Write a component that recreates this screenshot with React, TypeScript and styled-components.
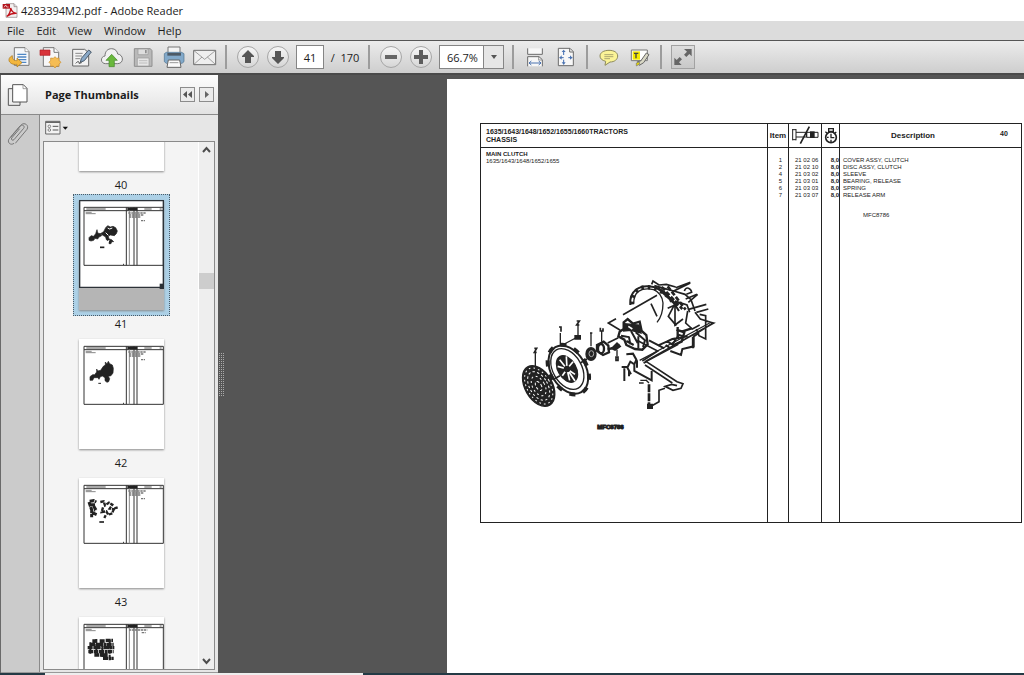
import React from "react";
import styled, { createGlobalStyle } from "styled-components";

const GlobalStyle = createGlobalStyle`
  *, *::before, *::after { box-sizing: border-box; }
  body { margin: 0; background: #fff; overflow: hidden; }
  button, input, select { font: inherit; color: inherit; margin: 0; }
`;

/* ---------- window frame ---------- */

const Window = styled.div`
  display: flex;
  flex-direction: column;
  height: 100vh;
  font-family: "Open Sans", "Noto Sans", sans-serif;
  font-size: 11px;
  color: #1c1c1c;
`;

const TitleBar = styled.header`
  display: flex;
  align-items: center;
  gap: 3px;
  height: 21px;
  padding-left: 2px;
  background: #fff;
`;

const WindowTitle = styled.h1`
  margin: 0;
  font-size: 11px;
  line-height: 20px;
  font-weight: 400;
  white-space: nowrap;
`;

const MenuBar = styled.nav`
  display: flex;
  align-items: center;
  gap: 12px;
  height: 19px;
  padding-left: 7px;
  background: #dcdcdc;
`;

const MenuItem = styled.button`
  padding: 0;
  border: 0;
  background: none;
  line-height: 18px;
`;

const Toolbar = styled.div`
  display: flex;
  align-items: center;
  height: 35px;
  padding-left: 7px;
  border-top: 1px solid #555;
  border-bottom: 2px solid #4a4a4a;
  background: linear-gradient(#ececec, #cecece);
`;

const ToolGroup = styled.div<{ $gap?: number }>`
  display: flex;
  align-items: center;
  gap: ${(p) => p.$gap ?? 7}px;
`;

const Separator = styled.span`
  width: 2px;
  height: 24px;
  margin: 0 9px 0 8px;
  background: #9c9c9c;
`;

const ToolButton = styled.button<{ $framed?: boolean }>`
  display: grid;
  place-items: center;
  width: 24px;
  height: 24px;
  padding: 0;
  border: ${(p) => (p.$framed ? "1px solid #a2a2a2" : "0")};
  background: ${(p) => (p.$framed ? "linear-gradient(#dedede, #c8c8c8)" : "none")};
`;

const RoundButton = styled(ToolButton)`
  > svg {
    width: 22px;
    height: 22px;
    border: 1px solid #a6a6a6;
    border-radius: 50%;
    background: linear-gradient(#f6f6f6, #d6d6d6);
  }
`;

const PageInput = styled.input`
  width: 28px;
  height: 24px;
  padding: 0;
  border: 1px solid #858585;
  background: #fff;
  text-align: center;
`;

const PageCount = styled.span`
  width: 30px;
  text-align: center;
  white-space: pre;
`;

const ZoomBox = styled.label`
  position: relative;
  display: block;
  width: 65px;
  height: 24px;
  border: 1px solid #858585;
  background: linear-gradient(#fff, #fff) 0 0 / 44px 100% no-repeat, #e6e6e6;
`;

const ZoomSelect = styled.select`
  width: 100%;
  height: 22px;
  padding: 0 0 0 7px;
  border: 0;
  background: none;
  appearance: none;
`;

const ZoomArrow = styled.span`
  position: absolute;
  top: 0;
  right: 0;
  display: grid;
  place-items: center;
  width: 20px;
  height: 22px;
  border-left: 1px solid #858585;
  pointer-events: none;
`;

const Workspace = styled.div`
  flex: 1;
  min-height: 0;
  display: flex;
  border-left: 1px solid #6a6a6a;
  background: #555;
`;

/* ---------- side panel ---------- */

const Sidebar = styled.aside`
  display: flex;
  flex-direction: column;
  width: 217px;
  background: #e6e6e6;
  border-bottom: 1px solid #999;
`;

const SidebarHeader = styled.div`
  display: flex;
  align-items: center;
  height: 40px;
  padding-right: 4px;
  border-bottom: 1px solid #8a8a8a;
  background: linear-gradient(#fdfdfd, #e2e2e2);
`;

const PanelTab = styled.button`
  display: grid;
  place-items: center;
  width: 38px;
  height: 38px;
  padding: 0 4px 0 0;
  border: 0;
  background: none;
`;

const PanelTitle = styled.h2`
  flex: 1;
  margin: 0;
  padding-left: 6px;
  font-size: 11px;
  line-height: 16px;
  font-weight: 700;
`;

const PanelNavButton = styled.button`
  display: grid;
  place-items: center;
  width: 15px;
  height: 15px;
  margin-left: 4px;
  padding: 0;
  border: 1px solid #8c8c8c;
  background: #ebebeb;
`;

const SidebarBody = styled.div`
  flex: 1;
  min-height: 0;
  display: flex;
`;

const Rail = styled.div`
  width: 39px;
  border-right: 1px solid #8a8a8a;
  background: #cbcbcb;
`;

const PanelBody = styled.div`
  flex: 1;
  min-width: 0;
  display: flex;
  flex-direction: column;
  padding: 0 3px 2px 3px;
`;

const OptionsButton = styled.button`
  display: flex;
  align-items: center;
  width: 28px;
  height: 26px;
  margin-left: 2px;
  padding: 0;
  border: 0;
  background: none;
`;

const ThumbnailBox = styled.div`
  flex: 1;
  min-height: 0;
  display: flex;
  border: 1px solid #8a8a8a;
  background: #f4f4f4;
`;

const ThumbnailList = styled.ol`
  flex: 1;
  margin: 0;
  padding: 0;
  list-style: none;
  overflow: hidden;

  > li:first-child {
    margin-top: -87px;
  }
`;

const ThumbnailItem = styled.li`
  display: flex;
  flex-direction: column;
  align-items: center;
  height: 139px;
`;

const ThumbnailButton = styled.button<{ $selected?: boolean }>`
  width: 97px;
  height: 122px;
  padding: 5px;
  border: 1px ${(p) => (p.$selected ? "dotted #4a5a66" : "solid transparent")};
  background: ${(p) => (p.$selected ? "#acd0e6" : "none")};
`;

const ThumbnailSheet = styled.span<{ $selected?: boolean }>`
  display: block;
  height: 110px;
  background: ${(p) => (p.$selected ? "#b5b5b5" : "#fff")};
  box-shadow: 0 1px 2px #8a8a8a;
`;

const ThumbnailLabel = styled.span`
  line-height: 15px;
`;

const ScrollTrack = styled.div`
  display: flex;
  flex-direction: column;
  width: 16px;
  border-left: 1px solid #fff;
  background: #eee;
`;

const ScrollButton = styled.button`
  display: grid;
  place-items: center;
  height: 16px;
  padding: 0;
  border: 0;
  background: none;
`;

const ScrollSpace = styled.span<{ $share: number }>`
  flex: ${(p) => p.$share};
`;

const ScrollThumb = styled.span`
  height: 16px;
  background: #cdcdcd;
`;

const Splitter = styled.div`
  display: flex;
  align-items: center;
  width: 6px;
  padding-left: 1px;
`;

const Grip = styled.span`
  width: 5px;
  height: 45px;
  background: repeating-linear-gradient(#555 0 1px, transparent 1px 2px),
    repeating-linear-gradient(90deg, #aaa 0 1px, #555 1px 2px);
`;

/* ---------- document ---------- */

const DocumentView = styled.main`
  flex: 1;
  min-width: 0;
  display: flex;
  padding: 4px 0 0 223px;
`;

const Sheet = styled.article`
  flex: 1;
  min-width: 0;
  padding: 44px 2px 0 33px;
  background: #fff;
  color: #222;
  font-family: "Liberation Sans", Arial, sans-serif;
  font-size: 6px;
  line-height: 7px;
`;

const PartsTable = styled.table`
  width: 100%;
  table-layout: fixed;
  border-collapse: collapse;
  border: 1px solid #222;

  th, td {
    padding: 0;
    border-left: 1px solid #222;
    vertical-align: top;
    font-size: 6px;
    line-height: 7px;
    white-space: nowrap;
  }
`;

const HeadRow = styled.tr`
  height: 24px;
  border-bottom: 1px solid #222;

  && th {
    vertical-align: middle;
  }
`;

const DocumentTitle = styled.span`
  display: block;
  padding-left: 5px;
  text-align: left;
  font-size: 7px;
  line-height: 8px;
`;

const ColumnTitle = styled.span`
  display: block;
  font-size: 8px;
  line-height: 10px;
`;

const DescriptionHead = styled.span`
  display: grid;
  grid-template-columns: 146px 1fr;
  text-align: center;
  line-height: 10px;

  > small {
    padding-left: 14px;
    text-align: left;
    font-size: 7px;
    line-height: 6px;
  }
`;

const HeadIcon = styled.svg`
  display: block;
  margin: 0 auto;
`;

const PartRow = styled.tr<{ $height?: number }>`
  height: ${(p) => p.$height ?? 7}px;
`;

const NumberCell = styled.td`
  text-align: right;

  && {
    padding-right: ${6}px;
  }
`;

const CodeCell = styled.td`
  && {
    padding-left: 6px;
  }
`;

const QuantityCell = styled.td`
  text-align: right;
  font-weight: 700;
`;

const TextCell = styled.td`
  && {
    padding-left: 3px;
  }
`;

const DrawingNumber = styled.span`
  display: block;
  padding: 13px 0 0 20px;
`;

const Section = styled.div`
  padding: 3px 0 0 5px;
`;

const SectionTitle = styled.h3`
  margin: 0;
  font-size: 6px;
  line-height: 7px;
  font-weight: 700;
`;

const Models = styled.p`
  margin: 0;
`;

const Figure = styled.figure`
  width: 220px;
  margin: 106px 0 0 25px;

  > svg { display: block; }
`;

const FigureCaption = styled.figcaption`
  padding-right: 21px;
  margin-top: 5px;
  text-align: center;
  font-weight: 700;
  -webkit-text-stroke: 1px #222;
`;

const Taskbar = styled.footer`
  height: 2px;
  background: #243a45;

  &::before {
    content: "";
    display: block;
    width: 318px;
    height: 2px;
    margin-left: 45px;
    background: #eee;
  }
`;

/* ---------- icons ---------- */

const PdfIcon = () => (
  <svg width="16" height="18" viewBox="3 6 48 54" aria-hidden="true">
    <path d="M15 11h24l9 9v32H15z" fill="#f4f0f0" stroke="#8d8181" strokeWidth="2" />
    <path d="M39 11v9h9" fill="#ddd" stroke="#8d8181" strokeWidth="2" />
    <path d="M5 12h22v14H5z" fill="#b3151d" />
    <path d="M9 22l5-7 3 6h6" fill="none" stroke="#fff" strokeWidth="2" />
    <path d="M17 49c6-3 13-15 12-25 3 10 9 16 18 16-10-1-20 2-30 9z" fill="none" stroke="#c0121b" strokeWidth="4" />
  </svg>
);

const OpenIcon = () => (
  <svg width="24" height="24" viewBox="24 135 72 72" aria-hidden="true">
    <path d="M46 143h32l12 12v41H46z" fill="#f5f7fa" stroke="#777" strokeWidth="3" />
    <path d="M78 143v12h12" fill="#fff" stroke="#777" strokeWidth="2" />
    <path d="M55 163h27M55 171h27M55 179h27M62 187h20" stroke="#4f87c4" strokeWidth="4" />
    <path d="M40 167c-9 4-13 12-8 19 5 7 14 8 22 7v8l15-13-15-14v8c-8 0-15-3-14-15z" fill="#f3b63c" stroke="#a87518" strokeWidth="2" />
  </svg>
);

const CreatePdfIcon = () => (
  <svg width="24" height="24" viewBox="117 135 72 72" aria-hidden="true">
    <path d="M133 143h32l14 14v42h-46z" fill="#f7f7f7" stroke="#777" strokeWidth="3" />
    <path d="M165 143v14h14" fill="#fff" stroke="#777" strokeWidth="3" />
    <path d="M123 150h30v16h-30z" fill="#d8343b" stroke="#b01e25" strokeWidth="2" />
    <path d="M168 170l5 5 7-1v7l6 6-6 5v7l-7-1-5 6-5-6-8 1v-7l-5-5 5-6v-7l8 1z" fill="#f5bd55" stroke="#c98b28" strokeWidth="2" />
  </svg>
);

const SignIcon = () => (
  <svg width="24" height="24" viewBox="210 135 72 72" aria-hidden="true">
    <path d="M221 148h36l12 10v40h-48z" fill="#f2f2f2" stroke="#666" strokeWidth="3" />
    <path d="M229 160h22M229 168h20M229 176h14" stroke="#888" strokeWidth="3" />
    <path d="M244 187l3-12 22-25 8 6-21 26z" fill="#8aa9c8" stroke="#4c5c6c" strokeWidth="3" />
    <path d="M230 190c8-8 10-6 10 0l8-2" fill="none" stroke="#444" strokeWidth="3" />
  </svg>
);

const CloudIcon = () => (
  <svg width="24" height="24" viewBox="300 135 72 72" aria-hidden="true">
    <path d="M317 191c-16 0-17-21-2-23 0-14 8-22 20-22 11 0 17 8 18 16 18 2 20 28 0 29z" fill="#f1f1f1" stroke="#777" strokeWidth="3" />
    <path d="M335 163l17 18h-9v19h-16v-19h-9z" fill="#69b83c" stroke="#43852a" strokeWidth="2" />
  </svg>
);

const SaveIcon = () => (
  <svg width="24" height="24" viewBox="391 135 72 72" aria-hidden="true">
    <path d="M401 146h48l5 6v47h-53z" fill="#b9b9b9" stroke="#8f8f8f" strokeWidth="3" />
    <path d="M412 147h30v17h-30z" fill="#dedede" stroke="#999" strokeWidth="2" />
    <path d="M433 150h5v10h-5z" fill="#8f8f8f" />
    <path d="M410 174h35v24h-35z" fill="#e6e6e6" stroke="#999" strokeWidth="2" />
    <path d="M415 182h25M415 189h25" stroke="#aaa" strokeWidth="2" />
  </svg>
);

const PrintIcon = () => (
  <svg width="24" height="24" viewBox="483 135 72 72" aria-hidden="true">
    <path d="M501 141h36v26h-36z" fill="#f4f4f4" stroke="#777" strokeWidth="3" />
    <path d="M490 161l6-4h46l7 4v24l-6 5h-47l-6-5z" fill="#82a9ca" stroke="#4d6f8d" strokeWidth="2" />
    <path d="M499 159h41v8h-41z" fill="#4d5a66" />
    <path d="M502 180h34l4 22h-42z" fill="#fafafa" stroke="#666" strokeWidth="3" />
    <path d="M506 188h26" stroke="#999" strokeWidth="3" />
  </svg>
);

const MailIcon = () => (
  <svg width="24" height="24" viewBox="575 135 72 72" aria-hidden="true">
    <path d="M577 151h66v43h-66z" fill="#efefef" stroke="#6f6f6f" strokeWidth="3" />
    <path d="M578 152l32 26 32-26M578 193l24-22M642 193l-24-22" fill="none" stroke="#777" strokeWidth="2" />
  </svg>
);

const ArrowUpIcon = () => (
  <svg viewBox="0 0 20 20" aria-hidden="true"><path d="M10 3l6 6v1h-3v6H7v-6H4V9z" fill="#555" /></svg>
);
const ArrowDownIcon = () => (
  <svg viewBox="0 0 20 20" aria-hidden="true"><path d="M10 17l6-6v-1h-3V4H7v6H4v1z" fill="#555" /></svg>
);
const MinusIcon = () => (
  <svg viewBox="0 0 20 20" aria-hidden="true"><path d="M4 8h12v4H4z" fill="#666" /></svg>
);
const PlusIcon = () => (
  <svg viewBox="0 0 20 20" aria-hidden="true"><path d="M8 3h4v5h5v4h-5v5H8v-5H3V8h5z" fill="#5c5c5c" /></svg>
);

const FitWidthIcon = () => (
  <svg width="24" height="24" viewBox="65 27 72 72" aria-hidden="true">
    <path d="M79 37v18h44V37" fill="#f7f7f7" stroke="#6a6a6a" strokeWidth="3" />
    <path d="M79 91V62h34l10 9v20" fill="#f7f7f7" stroke="#6a6a6a" strokeWidth="3" />
    <path d="M112 62v10h10" fill="none" stroke="#6a6a6a" strokeWidth="2" />
    <path d="M83 81h36M90 75l-7 6 7 6M112 75l7 6-7 6" fill="none" stroke="#4a72b0" strokeWidth="3" />
  </svg>
);

const FitPageIcon = () => (
  <svg width="24" height="24" viewBox="159 27 72 72" aria-hidden="true">
    <path d="M172 37h35l10 10v42h-45z" fill="#f7f7f7" stroke="#6a6a6a" strokeWidth="3" />
    <path d="M206 37v11h11" fill="none" stroke="#6a6a6a" strokeWidth="3" />
    <path d="M188 46v11M188 71v14M176 65h12M202 65h12" stroke="#3f6cb4" strokeWidth="3" />
    <path d="M182 48l6-7 6 7zM182 79l6 7 6-7zM182 58l-7 7 7 6zM207 58l7 7-7 6z" fill="#4a72b0" />
  </svg>
);

const CommentIcon = () => (
  <svg width="24" height="24" viewBox="287 27 72 72" aria-hidden="true">
    <path d="M323 43c16 0 26 7 26 17s-9 18-23 18l-15 10 2-12c-11-3-17-8-17-16 0-10 11-17 27-17z" fill="#fbf497" stroke="#8d8a5b" strokeWidth="3" />
    <path d="M309 56h27M309 62h27M309 68h17" stroke="#85825c" strokeWidth="2" />
  </svg>
);

const HighlightIcon = () => (
  <svg width="24" height="24" viewBox="379 27 72 72" aria-hidden="true">
    <path d="M389 42h48v32h-48z" fill="#fff" stroke="#777" strokeWidth="3" />
    <path d="M393 46h22v25h-22z" fill="#f5ea00" />
    <path d="M397 52h13M403 52v15" stroke="#444" strokeWidth="4" />
    <path d="M407 77l10-2 17-24 8 5-16 24-13 8z" fill="#d9d8c5" stroke="#666" strokeWidth="3" />
    <path d="M404 81l9-3 1 6-10 6z" fill="#e8d900" stroke="#777" strokeWidth="2" />
  </svg>
);

const FullScreenIcon = () => (
  <svg width="22" height="22" viewBox="512 30 66 66" aria-hidden="true">
    <path d="M548 39h23v22l-7-7-9 9-7-7 9-9z" fill="#666" />
    <path d="M519 87V65l7 7 9-9 7 7-9 9 8 8z" fill="#666" />
  </svg>
);

const PagesIcon = () => (
  <svg width="22" height="24" viewBox="22 18 66 72" aria-hidden="true">
    <path d="M26 35h35v50H26z" fill="#ededed" stroke="#555" strokeWidth="3" />
    <path d="M39 23h32l11 11v41H39z" fill="#fff" stroke="#555" strokeWidth="3" />
    <path d="M70 23v12h12" fill="none" stroke="#777" strokeWidth="2" />
  </svg>
);

const ClipIcon = () => (
  <svg width="24" height="26" viewBox="16 135 72 78" aria-hidden="true">
    <path
      d="M30 184l29-34c6-6 15 0 10 7l-29 34c-4 4-10 0-7-5l24-28M40 202c-9 7-20-1-16-11 1-3 35-43 38-45 10-8 24 2 17 14l-35 42"
      fill="none"
      stroke="#777"
      strokeWidth="3"
    />
  </svg>
);

const OptionsIcon = () => (
  <svg width="24" height="16" viewBox="137 130 72 48" aria-hidden="true">
    <path d="M139 134h43v38h-43z" fill="#f3f3f3" stroke="#666" strokeWidth="3" />
    <path d="M139 137h43" stroke="#666" strokeWidth="4" />
    <circle cx="150" cy="149" r="4" fill="none" stroke="#555" strokeWidth="2" />
    <circle cx="150" cy="160" r="4" fill="none" stroke="#555" strokeWidth="2" />
    <path d="M160 149h17M160 160h17" stroke="#555" strokeWidth="3" />
    <path d="M190 150h16l-8 9z" fill="#111" />
  </svg>
);

const Triangle = ({ double }: { double?: boolean }) => (
  <svg width="11" height="9" viewBox="0 0 11 9" aria-hidden="true">
    {double ? <path d="M5 1v7L1 4.500zM10 1v7L6 4.500z" fill="#555" /> : <path d="M4 1l4 3.500-4 3.500z" fill="#666" />}
  </svg>
);

const Chevron = ({ up }: { up?: boolean }) => (
  <svg width="9" height="8" viewBox="0 0 9 8" aria-hidden="true">
    <path d={up ? "M1 6l3.500-4L8 6" : "M1 2l3.500 4L8 2"} fill="none" stroke="#4d4d4d" strokeWidth="2" />
  </svg>
);

const PartNumberIcon = () => (
  <HeadIcon width="29" height="20" viewBox="101 27 87 60" aria-label="Part number">
    <path d="M106 36v34M116 36v34M106 38h10M106 68h10M116 46h32v14h-32M148 46h34v15h-34z" fill="none" stroke="#222" strokeWidth="3" />
    <path d="M158 43h14v20h-14z" fill="#222" />
    <path d="M156 29L129 80" stroke="#222" strokeWidth="5" />
  </HeadIcon>
);

const QuantityIcon = () => (
  <HeadIcon width="14" height="18" viewBox="195 30 42 54" aria-label="Quantity">
    <circle cx="216" cy="61" r="16" fill="none" stroke="#222" strokeWidth="5" />
    <path d="M209 35h14v8h-14zM216 50v12h10M199 44l8 6M232 45l-7 5M204 61h5M216 68v7" fill="none" stroke="#222" strokeWidth="4" />
  </HeadIcon>
);

/* ---------- page thumbnails ---------- */

const thumbnailArt: Record<number, React.ReactNode> = {
  41: (
    <g fill="#222" stroke="#222">
      <path d="M30 113l6-6 8 2 6-8 4-12 2 10 8 2 4 6-8 4-4 6-8-2-4 6-8 2-6-2z" strokeWidth="2" />
      <path d="M64 101l10-6 6-12 6-6 8 4 8-2 8 4 5 10-3 8-6 6-12-2-6 4 2 8 8 2 6 6-6 0-2 6-6 0-2-8-6-4-2-8z" strokeWidth="2" />
      <path d="M86 84l6 3 8-3M80 98l8 8M90 120l-4 12" stroke="#fff" strokeWidth="3" fill="none" />
      <path d="M63 142h13" strokeWidth="5" />
    </g>
  ),
  42: (
    <g fill="#222" stroke="#222">
      <path d="M33 113l8-6 6 0 6-8 0-9 3 6 9-2 8-12 6-4 0-9 5 6 4-8 4 7 8 4 3 10-1 14-6 8-8 2 4 7-3 9-5 2-6-5 0-9-8-5-6 2-4 8-3-5-12 0-4 8-8 0z" strokeWidth="2" />
      <path d="M58 133h8" strokeWidth="3" />
    </g>
  ),
  43: (
    <g stroke="#222" fill="none">
      <path d="M32 70l12-2 8 4M34 80l14 0M30 72l8 24 10 0M44 84l8 14M40 104l14 6M38 92v26" strokeWidth="9" strokeDasharray="14 2" />
      <path d="M64 72l10-2 4 12 12-8 10 6-8 12 16 2M72 88l-4 14 14-2 6 10 12-4 4-14 12-4M80 112l-4 8" strokeWidth="7" strokeDasharray="11 3" />
      <path d="M61 132h14" strokeWidth="5" />
    </g>
  ),
  44: (
    <g stroke="#222" fill="none">
      <path d="M26 92h30M28 104h30M34 82h24M40 72h14M62 72h16M80 70h22M58 82h46M50 92h56M60 104h44M46 114h40M72 124h32" strokeWidth="10" strokeDasharray="15 2 7 1" />
      <path d="M34 76v34M52 66v50M70 78v44M92 68v62" strokeWidth="6" strokeDasharray="12 3" />
    </g>
  ),
};

const Thumbnail = ({ page, selected }: { page: number; selected?: boolean }) => (
  <svg width="85" height="110" viewBox="0 0 255 330" aria-hidden="true" style={{ display: "block" }}>
    {selected && <path d="M2 2h251v260H2z" fill="#fff" />}
    {thumbnailArt[page] && (
      <>
        <g stroke="#333" fill="none" strokeWidth="3">
          <path d="M15 22h238v174H15z" />
          <path d="M15 32h238M142 22v174M165 22v174M174 22v174" />
          <path d="M151 22v174" stroke="#888" />
        </g>
        <path d="M145 27h30" stroke="#222" strokeWidth="8" />
        <path d="M22 27h58M196 27h22M242 27h6" stroke="#555" strokeWidth="3" />
        <path d="M20 37h18M20 41h30" stroke="#888" strokeWidth="3" />
        <path
          d={page === 44 ? "M150 39h55M188 47h12" : "M148 39h54M150 45h44M150 51h34M186 62h12"}
          stroke="#777"
          strokeWidth="4"
          strokeDasharray="7 2"
        />
        {thumbnailArt[page]}
        <path d="M132 193h3" stroke="#222" strokeWidth="3" />
      </>
    )}
    {selected && (
      <>
        <path d="M2 2h251v260H2z" fill="none" stroke="#2c3238" strokeWidth="4" />
        <path d="M242 251h16v16h-16z" fill="#2c3238" />
      </>
    )}
  </svg>
);

/* ---------- exploded view of the clutch ---------- */

const ClutchDrawing = () => (
  <svg width="220" height="148" viewBox="0 0 660 444" role="img" aria-label="Main clutch exploded view">
    <g fill="none" stroke="#222" strokeWidth="4">
      {/* clutch disc */}
      <ellipse cx="83" cy="345" rx="41" ry="66" transform="rotate(-30 83 345)" fill="#222" />
      <g stroke="#fff" strokeWidth="3">
        <ellipse cx="83" cy="345" rx="35" ry="59" transform="rotate(-30 83 345)" strokeDasharray="5 9" />
        <ellipse cx="83" cy="345" rx="27" ry="47" transform="rotate(-30 83 345)" strokeDasharray="7 7" />
        <ellipse cx="83" cy="345" rx="18" ry="32" transform="rotate(-30 83 345)" strokeDasharray="6 8" />
        <ellipse cx="83" cy="345" rx="8" ry="15" transform="rotate(-30 83 345)" strokeDasharray="8 6" />
      </g>
      {/* cover */}
      <ellipse cx="172" cy="296" rx="52" ry="78" transform="rotate(-30 172 296)" fill="#fff" strokeWidth="6" />
      <ellipse cx="172" cy="296" rx="55" ry="80" transform="rotate(-30 172 296)" strokeWidth="12" strokeDasharray="18 24" />
      <ellipse cx="169" cy="294" rx="43" ry="66" transform="rotate(-30 169 294)" />
      <ellipse cx="168" cy="294" rx="27" ry="43" transform="rotate(-30 168 294)" fill="#222" />
      <path d="M168 294l-22-28M168 294l-2-38M168 294l18-22M168 294l24 16M168 294l8 34M168 294l-14 20M168 294l-28-8M168 294l24 36" stroke="#fff" strokeWidth="5" />
      <circle cx="168" cy="294" r="8" fill="#222" />
      {/* bearing and sleeve */}
      <ellipse cx="240" cy="249" rx="15" ry="19" fill="#222" />
      <ellipse cx="241" cy="248" rx="7" ry="9" stroke="#aaa" strokeWidth="3" />
      <path d="M258 222l20-10 14 12 2 20-18 8-18-12z" fill="#fff" strokeWidth="7" />
      <ellipse cx="270" cy="233" rx="9" ry="14" strokeWidth="7" />
      <path d="M290 236l28-10 8-6M304 232l14-14 8 8-14 10z" strokeWidth="7" />
      {/* axis and callouts */}
      <path d="M125 326l22-12M208 276l20-12M290 216l32-16" strokeWidth="5" />
      <path d="M148 186v38M201 160v32M240 186v40M272 180v32M73 242v46M318 236v20M160 219l34-18" />
      <path d="M144 168h6v14M197 150h8l-8 12h8M237 186h7M268 170v10h8v-8M70 232h7l-7 12h7M315 258h6v10h-6z" strokeWidth="5" />
      <path d="M192 194h16v10h-16z" fill="#222" />
      {/* fork housing */}
      <path d="M338 154l12-10 16 14 20-6 6 28 14 12 4 28-16 16-22-2-26-12-6-16-18-10 4-14 12-8z" fill="#fff" strokeWidth="7" />
      <path d="M340 158l44 4 6 24-30-8-22 2z" fill="#222" />
      <path d="M330 194l24 4 4 22M360 180l20 36M374 184l28 24-6 20M382 196v36M346 210l22 12" strokeWidth="6" />
      <path d="M352 166l12 8M346 190l12 4M388 204l6 16" stroke="#fff" strokeWidth="5" />
      <path d="M315 143l-23 13 36 22M336 131l102-58M382 210l58 30-46 30" strokeWidth="5" />
      {/* bell housing */}
      <path d="M358 102c-4-42 28-64 70-54 26 8 58 38 76 72" strokeWidth="6" />
      <path d="M368 98c0-36 22-50 60-42 14 6 26 20 28 40 0 24-6 44-18 58" strokeWidth="4" />
      <path d="M363 100c-2-38 24-58 62-50 28 6 52 30 74 58" strokeWidth="13" strokeDasharray="8 12" />
      <path d="M422 40l4-10 18 12 22-2 28 8M420 98l18 38M430 44l58 16 50-24M494 50l44-16M488 60l34 10 18 16 12 34M458 60l34 38-20 38 24 28" strokeWidth="5" />
      <path d="M440 50l50 46M452 48l62 66M470 46l54 70" strokeWidth="8" strokeDasharray="14 6" />
      <path d="M520 60c6-16 20-8 22 4l-16 6M524 84l34-14M532 94l28-24M492 90l36 12 8 22M470 112l22-10v60l24-18M530 116l56-16M556 124l36-10" strokeWidth="5" />
      <path d="M530 120l-6 36 20 18 22-12M552 124l16 20 38 12-50 32M566 130l18 4v70l-20-10-8-20M584 150l24 6-206 116" strokeWidth="5" />
      <path d="M414 208l46 24M440 224l22-10 22-10 46-8M466 210l18 10 20-28 18 6M478 232l-14-10M478 240l32 12 4-18 34-8v-30l16-10" strokeWidth="6" />
      <path d="M496 176l24 8-8 28-28 12M500 168v36M512 182l30-10M546 198v34" strokeWidth="7" />
      {/* release arm */}
      <path d="M386 268l76-40 134-72M398 276l104-56" strokeWidth="4" />
      <path d="M346 250l20-2 10 18-6 14-12-8-8 16-14 0M332 288l16 0 12 22M340 292v38M354 300v16M378 268v22M370 280v20l52 28v-28" strokeWidth="6" />
      <path d="M388 328h18M404 326l10 10M384 336h14" strokeWidth="4" />
      <path d="M398 276l8-4 92 60 18 6-6 14-24 6-24-12 20-6 16 4M402 282l82 54M462 352l-18 6v34l-24 14" strokeWidth="5" />
      <path d="M414 340v62" strokeWidth="8" strokeDasharray="24 3" />
      <path d="M410 400h14v12h-14z" fill="#222" />
    </g>
  </svg>
);

/* ---------- content ---------- */

const parts = [
  ["1", "21 02 06", "8,0", "COVER ASSY, CLUTCH"],
  ["2", "21 02 10", "8,0", "DISC ASSY, CLUTCH"],
  ["4", "21 03 02", "8,0", "SLEEVE"],
  ["5", "21 03 01", "8,0", "BEARING, RELEASE"],
  ["6", "21 03 03", "8,0", "SPRING"],
  ["7", "21 03 07", "8,0", "RELEASE ARM"],
];

const pages = [40, 41, 42, 43, 44];
const currentPage = 41;

const fileTools: [string, () => React.ReactElement][] = [
  ["Open", OpenIcon],
  ["Create PDF", CreatePdfIcon],
  ["Sign", SignIcon],
  ["Upload", CloudIcon],
  ["Save", SaveIcon],
  ["Print", PrintIcon],
  ["Email", MailIcon],
];

const PartsPage = () => (
  <Sheet>
    <PartsTable>
      <colgroup>
        <col />
        <col style={{ width: 21 }} />
        <col style={{ width: 33 }} />
        <col style={{ width: 18 }} />
        <col style={{ width: 182 }} />
      </colgroup>
      <thead>
        <HeadRow>
          <th>
            <DocumentTitle>1635/1643/1648/1652/1655/1660TRACTORS</DocumentTitle>
            <DocumentTitle>CHASSIS</DocumentTitle>
          </th>
          <th><ColumnTitle>Item</ColumnTitle></th>
          <th><PartNumberIcon /></th>
          <th><QuantityIcon /></th>
          <th>
            <DescriptionHead>
              <ColumnTitle>Description</ColumnTitle>
              <small>40</small>
            </DescriptionHead>
          </th>
        </HeadRow>
      </thead>
      <tbody>
        <PartRow $height={9}>
          <td rowSpan={parts.length + 2}>
            <Section>
              <SectionTitle>MAIN CLUTCH</SectionTitle>
              <Models>1635/1643/1648/1652/1655</Models>
              <Figure>
                <ClutchDrawing />
                <FigureCaption>MFC8786</FigureCaption>
              </Figure>
            </Section>
          </td>
          <td /><td /><td /><td />
        </PartRow>
        {parts.map(([item, code, quantity, description]) => (
          <PartRow key={item}>
            <NumberCell>{item}</NumberCell>
            <CodeCell>{code}</CodeCell>
            <QuantityCell>{quantity}</QuantityCell>
            <TextCell>{description}</TextCell>
          </PartRow>
        ))}
        <PartRow $height={324}>
          <td /><td /><td />
          <TextCell><DrawingNumber>MFC8786</DrawingNumber></TextCell>
        </PartRow>
      </tbody>
    </PartsTable>
  </Sheet>
);

export default function App() {
  return (
    <>
      <GlobalStyle />
      <Window>
        <TitleBar>
          <PdfIcon />
          <WindowTitle>4283394M2.pdf - Adobe Reader</WindowTitle>
        </TitleBar>
        <MenuBar>
          {["File", "Edit", "View", "Window", "Help"].map((name) => (
            <MenuItem key={name}>{name}</MenuItem>
          ))}
        </MenuBar>
        <Toolbar>
          <ToolGroup>
            {fileTools.map(([name, Icon]) => (
              <ToolButton key={name} aria-label={name}><Icon /></ToolButton>
            ))}
          </ToolGroup>
          <Separator />
          <ToolGroup $gap={6}>
            <RoundButton aria-label="Previous page"><ArrowUpIcon /></RoundButton>
            <RoundButton aria-label="Next page"><ArrowDownIcon /></RoundButton>
            <PageInput aria-label="Page" defaultValue="41" />
            <PageCount>/  170</PageCount>
          </ToolGroup>
          <Separator />
          <ToolGroup $gap={6}>
            <RoundButton aria-label="Zoom out"><MinusIcon /></RoundButton>
            <RoundButton aria-label="Zoom in"><PlusIcon /></RoundButton>
            <ZoomBox>
              <ZoomSelect aria-label="Zoom"><option>66.7%</option></ZoomSelect>
              <ZoomArrow>
                <svg width="8" height="5" viewBox="0 0 8 5" aria-hidden="true"><path d="M1 0h6L4 4z" fill="#555" /></svg>
              </ZoomArrow>
            </ZoomBox>
          </ToolGroup>
          <Separator />
          <ToolGroup>
            <ToolButton aria-label="Fit width"><FitWidthIcon /></ToolButton>
            <ToolButton aria-label="Fit page"><FitPageIcon /></ToolButton>
          </ToolGroup>
          <Separator />
          <ToolGroup>
            <ToolButton aria-label="Add note"><CommentIcon /></ToolButton>
            <ToolButton aria-label="Highlight text"><HighlightIcon /></ToolButton>
          </ToolGroup>
          <Separator />
          <ToolButton $framed aria-label="Read mode"><FullScreenIcon /></ToolButton>
        </Toolbar>
        <Workspace>
          <Sidebar>
            <SidebarHeader>
              <PanelTab aria-label="Pages"><PagesIcon /></PanelTab>
              <PanelTitle>Page Thumbnails</PanelTitle>
              <PanelNavButton aria-label="Collapse panel"><Triangle double /></PanelNavButton>
              <PanelNavButton aria-label="Expand panel"><Triangle /></PanelNavButton>
            </SidebarHeader>
            <SidebarBody>
              <Rail>
                <PanelTab aria-label="Attachments"><ClipIcon /></PanelTab>
              </Rail>
              <PanelBody>
                <OptionsButton aria-label="Options"><OptionsIcon /></OptionsButton>
                <ThumbnailBox>
                  <ThumbnailList>
                    {pages.map((page) => (
                      <ThumbnailItem key={page}>
                        <ThumbnailButton $selected={page === currentPage} aria-label={`Page ${page}`}>
                          <ThumbnailSheet $selected={page === currentPage}>
                            <Thumbnail page={page} selected={page === currentPage} />
                          </ThumbnailSheet>
                        </ThumbnailButton>
                        <ThumbnailLabel>{page}</ThumbnailLabel>
                      </ThumbnailItem>
                    ))}
                  </ThumbnailList>
                  <ScrollTrack>
                    <ScrollButton aria-label="Scroll up"><Chevron up /></ScrollButton>
                    <ScrollSpace $share={24} />
                    <ScrollThumb />
                    <ScrollSpace $share={76} />
                    <ScrollButton aria-label="Scroll down"><Chevron /></ScrollButton>
                  </ScrollTrack>
                </ThumbnailBox>
              </PanelBody>
            </SidebarBody>
          </Sidebar>
          <Splitter><Grip /></Splitter>
          <DocumentView>
            <PartsPage />
          </DocumentView>
        </Workspace>
        <Taskbar />
      </Window>
    </>
  );
}
